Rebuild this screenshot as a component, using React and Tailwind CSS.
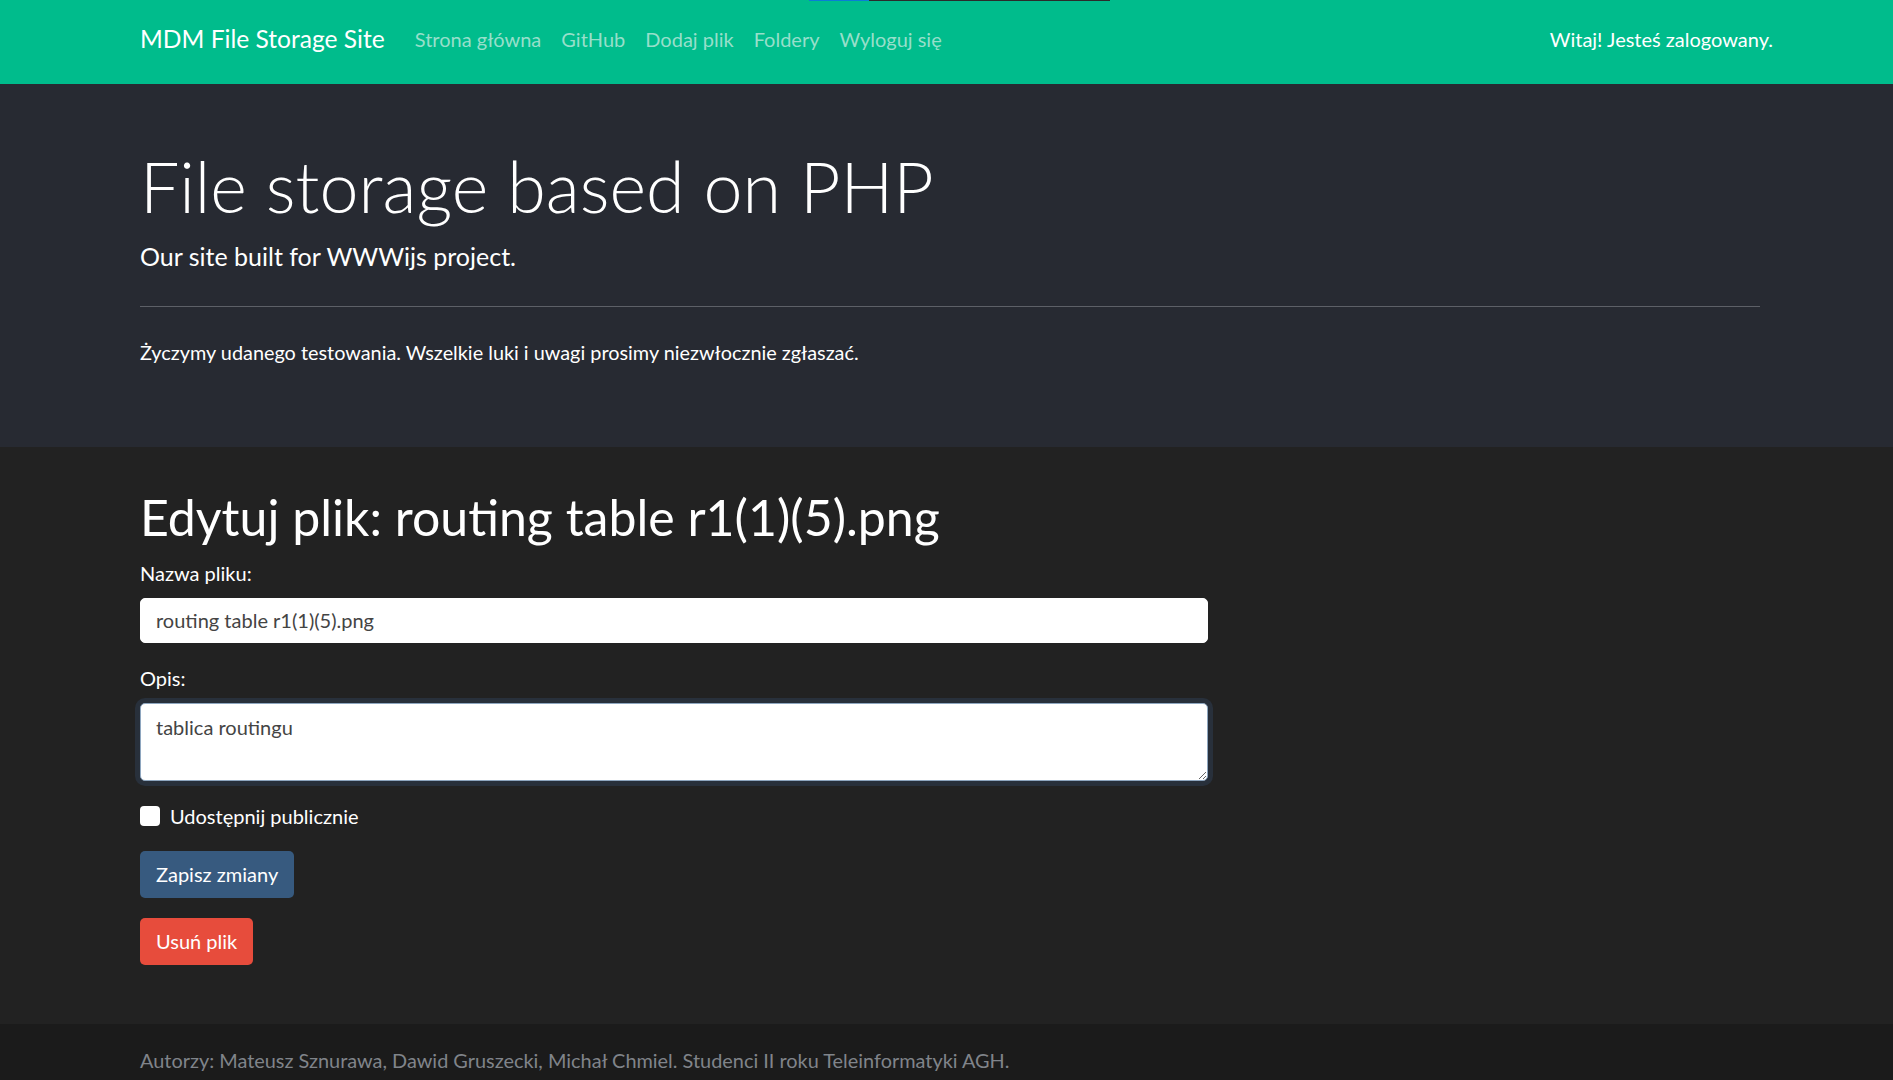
import { useState } from 'react';

const NAV_LINKS = ['Strona główna', 'GitHub', 'Dodaj plik', 'Foldery', 'Wyloguj się'];

const Navbar = () => (
  <nav className="relative h-[84px] bg-[#00bc8c] flex items-center justify-between pl-[140px] pr-[120px] pb-[6px]">
    {/* thin loading line at the very top */}
    <div className="absolute top-0 left-[809px] flex h-px">
      <div className="w-[60px] bg-[#0b7dd6]" />
      <div className="w-[241px] bg-[#2b2b2b]" />
    </div>
    <div className="flex items-center">
      <a className="text-[24.6px] leading-[36px] text-white mr-[20px]">MDM File Storage Site</a>
      <ul className="flex items-center">
        {NAV_LINKS.map((link) => (
          <li key={link}>
            <a className="block px-[10px] text-[20px] leading-[30px] text-[#97dfca]">{link}</a>
          </li>
        ))}
      </ul>
    </div>
    <span className="text-[20px] leading-[30px] text-white">Witaj! Jesteś zalogowany.</span>
  </nav>
);

const Jumbotron = () => (
  <section className="bg-[#272a32] pt-[60px] pb-[60px]">
    <div className="ml-[140px] w-[1620px]">
      <h1 className="text-[70px] leading-[84px] font-light text-white mb-[10px]">File storage based on PHP</h1>
      <p className="text-[25px] leading-[37.5px] text-white">Our site built for WWWijs project.</p>
      <hr className="my-[30px] border-0 h-px bg-[#5d6067]" />
      <p className="text-[19.85px] leading-[30px] text-white mb-[20px]">
        Życzymy udanego testowania. Wszelkie luki i uwagi prosimy niezwłocznie zgłaszać.
      </p>
    </div>
  </section>
);

const EditForm = () => {
  const [name, setName] = useState('routing table r1(1)(5).png');
  const [desc, setDesc] = useState('tablica routingu');
  const [shared, setShared] = useState(false);

  return (
    <section className="bg-[#222222] pt-[40px] pb-[39px]">
      <div className="ml-[140px] w-[1068px]">
        <h1 className="text-[50px] leading-[60px] text-white mb-[11px]">Edytuj plik: routing table r1(1)(5).png</h1>

        <div className="mb-[20px]">
          <label className="block text-[20px] leading-[30px] text-white mb-[10px]">Nazwa pliku:</label>
          <input
            className="block w-full h-[45px] bg-white rounded-[5px] border border-white px-[15px] text-[20px] text-[#444444] outline-none"
            value={name}
            onChange={(e) => setName(e.target.value)}
          />
        </div>

        <div className="mb-[20px]">
          <label className="block text-[20px] leading-[30px] text-white mb-[10px]">Opis:</label>
          <textarea
            className="block w-full h-[78px] bg-white rounded-[5px] border border-[#8ea6bf] px-[15px] py-[8px] text-[20px] leading-[30px] text-[#444444] outline-none shadow-[0_0_0_5px_#28303b]"
            value={desc}
            onChange={(e) => setDesc(e.target.value)}
          />
        </div>

        <label className="flex items-center gap-[10px] mb-[20px] text-[20px] leading-[30px] text-white">
          <input
            type="checkbox"
            checked={shared}
            onChange={(e) => setShared(e.target.checked)}
            className="appearance-none w-[20px] h-[20px] bg-white rounded-[4px] m-0"
          />
          Udostępnij publicznie
        </label>

        <div className="mb-[20px]">
          <button className="h-[47px] px-[16px] bg-[#375a7f] rounded-[5px] text-[20px] leading-[30px] text-white">
            Zapisz zmiany
          </button>
        </div>
        <div className="mb-[20px]">
          <button className="h-[47px] px-[16px] bg-[#e74c3c] rounded-[5px] text-[20px] leading-[30px] text-white">
            Usuń plik
          </button>
        </div>
      </div>
    </section>
  );
};

const Footer = () => (
  <footer className="bg-[#1b1b1b] pt-[21px] pb-[40px]">
    <p className="ml-[140px] text-[19.9px] leading-[30px] text-[#80848a]">
      Autorzy: Mateusz Sznurawa, Dawid Gruszecki, Michał Chmiel. Studenci II roku Teleinformatyki AGH.
    </p>
  </footer>
);

export default function App() {
  return (
    <div className="min-h-screen bg-[#222222] font-['Lato','Liberation_Sans',sans-serif]">
      <Navbar />
      <Jumbotron />
      <EditForm />
      <Footer />
    </div>
  );
}
